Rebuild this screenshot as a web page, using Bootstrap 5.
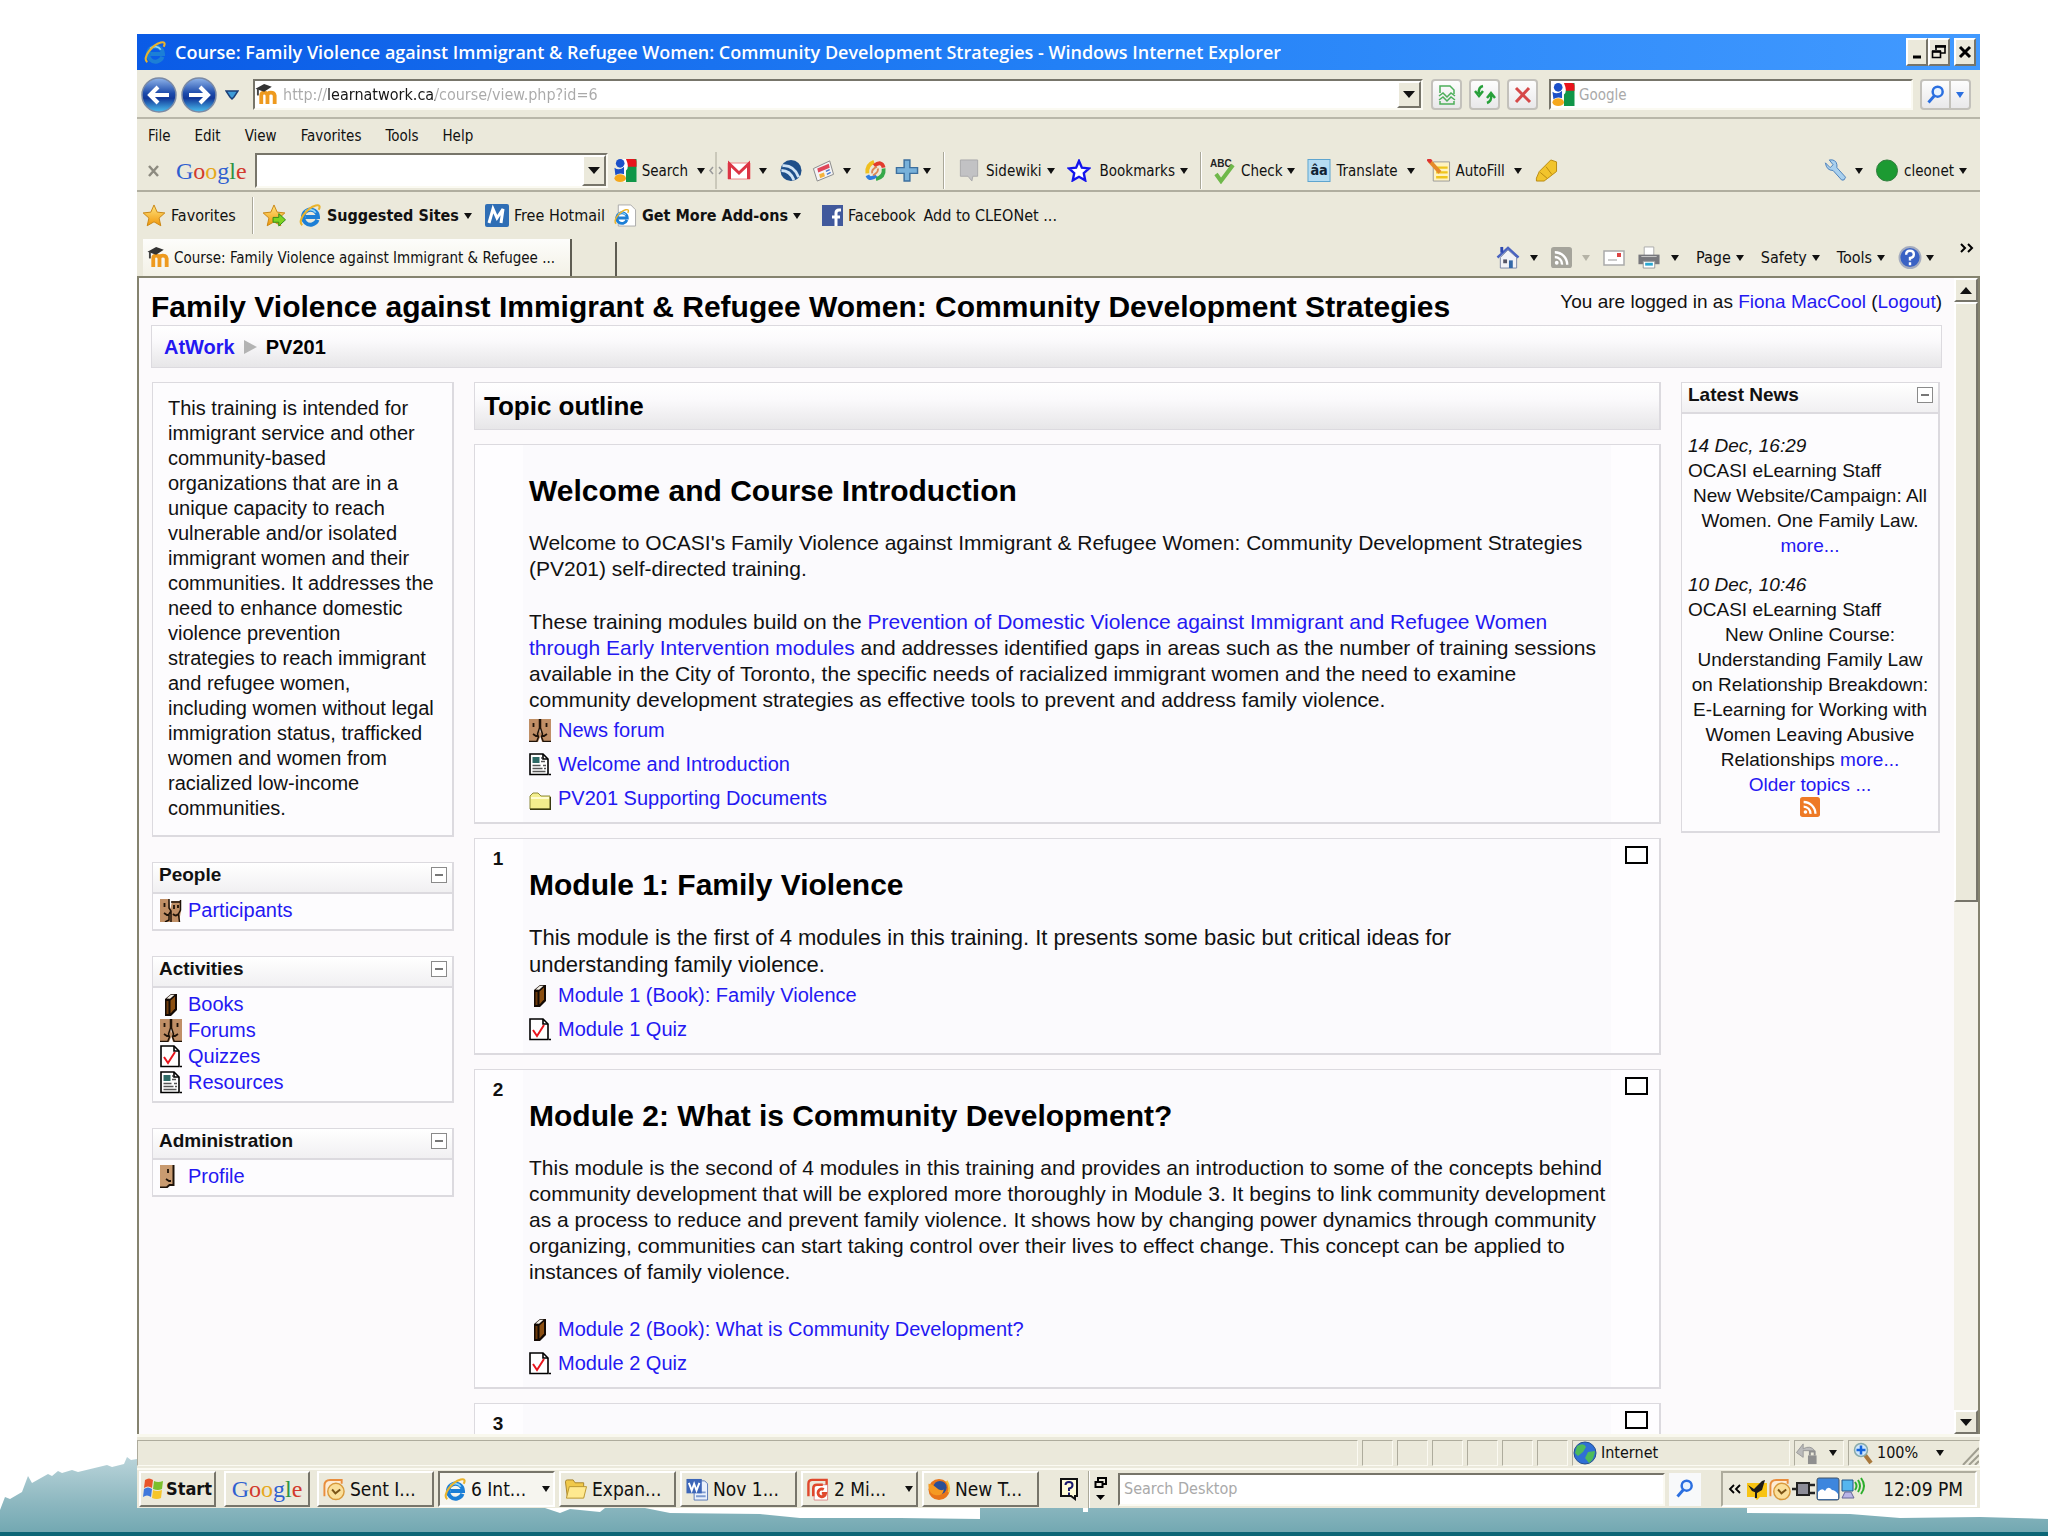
<!DOCTYPE html>
<html lang="en">
<head>
<meta charset="utf-8">
<meta name="viewport" content="width=device-width, initial-scale=1">
<title>Course: Family Violence against Immigrant &amp; Refugee Women</title>
<link href="https://cdn.jsdelivr.net/npm/bootstrap@5.3.0/dist/css/bootstrap.min.css" rel="stylesheet">
<script src="https://cdn.jsdelivr.net/npm/bootstrap@5.3.0/dist/js/bootstrap.bundle.min.js"></script>
<style>
:root{--face:#ebe9db;--link:#2418f2;--line:#dcdadf}
body{background:#fff;color:#111;font:15px/20px "DejaVu Sans Condensed","DejaVu Sans",sans-serif;height:100vh;padding:34px 68px 28px 137px;overflow:hidden}
button,input{font:inherit;color:inherit}
a{text-decoration:none;color:inherit}
svg{flex:none;display:block}
.scenery{position:absolute;left:0;bottom:0;width:100%;height:80px;z-index:-1}
.desk{background:var(--face);min-height:0}
.ico{width:24px;height:23px}
.ar{flex:none;width:0;height:0;border:4px solid transparent;border-top:6px solid #111;border-bottom:0;margin:0 5px 0 10px}
.ar-off{border-top-color:#b5b3a6}
.plain{background:none;border:0;padding:0;display:flex;align-items:center;white-space:nowrap;gap:5px}
/* title bar */
.titlebar{height:36px;background:linear-gradient(90deg,#0a5be6,#2280f6 50%,#429aff);color:#fff;font:600 18px/36px "Open Sans","Noto Sans",sans-serif;padding:0 4px 0 6px}
.winbtn{width:22px;height:28px;background:var(--face);border:2px solid;border-color:#fff #77756a #77756a #fff;padding:0;display:flex;align-items:center;justify-content:center}
/* address row */
.addressrow{height:49px;border-bottom:2px solid #b9b7a9;padding:2px 9px 0 4px}
.sunken{background:#fff;border:2px solid;border-color:#77756a #fbfaf2 #fbfaf2 #77756a;display:flex;align-items:center;min-width:0}
.sunken input{border:0;outline:0;background:none;padding:0 4px;flex:1;min-width:0}
.sunken input::placeholder{color:#a9a9a9;opacity:1}
.urlbox{height:31px;margin-left:14px;font-size:16px}
.urlbox input{background:linear-gradient(90deg,#a9a9a9 49px,#161616 49px,#161616 156px,#a9a9a9 156px);-webkit-background-clip:text;background-clip:text;-webkit-text-fill-color:transparent}
.drop{width:24px;align-self:stretch;background:var(--face);border:2px solid;border-color:#fff #77756a #77756a #fff;padding:0;display:flex;align-items:center;justify-content:center}
.drop .ar{margin:0;border-width:7px 6px 0}
.xpbtn{width:31px;height:31px;border:2px solid #c3c1bb;border-radius:4px;background:linear-gradient(#fdfdfd,#e9e8ea);padding:0;display:flex;align-items:center;justify-content:center}
.navbtns{gap:7px;margin:0 11px 0 8px}
.findbox{width:364px;height:31px;margin-right:7px}
.splitbtn{width:20px}
/* menu and toolbars */
.menurow{height:34px;padding:0 11px;gap:24px}
.gbar{height:39px;border-bottom:2px solid #b0ae9f;padding:0 9px 2px 11px}
.gbar .ar{margin:0 4px 0 8px}
.gword{font:24px/28px "Liberation Serif",serif;color:#2f5fd0}
.gword i{font-style:normal}
.r{color:#d23a2d}.y{color:#e6a81c}.g{color:#2b9443}
.gsearch{width:353px;height:35px;margin:0 5px 0 8px}
.vsep{width:2px;height:37px;border-left:1px solid #aaa899;border-right:1px solid #fff}
.favrow{height:47px;padding:0 5px;font-size:16px}
.tabrow{height:37px;padding:0 6px 0 6px}
.tab1{width:429px;height:37px;background:linear-gradient(#fdfdfb,#f3f1e6);border-right:2px solid #5e5c52;padding:0 4px;gap:3px;align-items:center}
.tab2{width:45px;height:34px;border-right:2px solid #5e5c52;align-self:flex-end}
.cmdbar{font-size:16px}
.more{margin-left:2px}
/* page */
.viewport{flex:1;min-height:0;border:2px solid #85836f;border-bottom:0;background:#fcfafc;overflow:hidden;font-family:"Liberation Sans",Arial,sans-serif}
.page{flex:1;min-width:0;padding:0 12px;overflow:hidden}
.page a{color:var(--link)}
.page h1{font-size:30px;line-height:34px;font-weight:700;color:#000;margin:0;white-space:nowrap}
.head{height:47px;padding-top:12px}
.login{font-size:19px;line-height:24px;white-space:nowrap}
.crumbs{height:43px;border:1px solid var(--line);background:linear-gradient(#fff,#fbfafc 35%,#e7e6e8);font-size:20px;font-weight:700;padding:0 12px;margin-bottom:14px;gap:9px;color:#000}
.crumbs i{border:7px solid transparent;border-left:13px solid #b3b3b3;border-right:0}
.leftcol{width:302px;margin-left:1px}
.centercol{min-width:0}
.rightcol{width:259px;margin-right:2px}
.cols{gap:20px}
.block{border:2px solid var(--line);border-width:1px 2px 2px 1px;background:#fdfcfe;font-size:20px;line-height:26px;margin-bottom:25px}
.block h2{height:31px;border-bottom:2px solid var(--line);background:linear-gradient(#fff,#f1f0f2);font-size:19px;line-height:26px;font-weight:700;margin:0;padding:0 5px 5px 6px;display:flex;justify-content:space-between;align-items:center}
.minus{width:16px;height:16px;border:1px solid #8a8a8a;background:#fff;padding:0;display:flex;align-items:center;justify-content:center}
.minus::before{content:"";width:8px;height:2px;background:#777}
.intro{padding:13px 0 14px 15px;line-height:25px;white-space:nowrap}
.list{padding:3px 6px 6px 7px}
.list a{display:flex;gap:6px;align-items:center}
.news{font-size:19px;line-height:25px;padding:19px 6px 14px;white-space:nowrap}
.newsitem{margin-bottom:14px}
.feed{color:#ee7a26!important}
.topicbar{height:48px;border:1px solid var(--line);border-right-width:2px;background:linear-gradient(#fff,#fbfafc 35%,#e7e6e8);font-size:26px;line-height:46px;font-weight:700;padding-left:9px;margin:0 0 14px;color:#000}
.topic{border:1px solid var(--line);border-width:1px 2px 2px 1px;background:#fefdff;margin-bottom:14px;font-size:21px;line-height:26px}
.num{width:48px;font-weight:700;text-align:center;padding-top:7px;flex:none;font-size:19px;padding-right:2px}
.mid{flex:1;background:#fbfafd;padding:29px 6px 7px;white-space:nowrap;min-width:0}
.mid h3{font-size:30px;line-height:34px;font-weight:700;color:#000;margin:0 0 22px}
.mid p{margin:0 0 27px}
.mid .tight{margin-bottom:0}
.mid .wide{font-size:22px;line-height:27px}
.item{display:flex;height:34px;align-items:center;gap:7px;font-size:20px}
.box{width:48px;flex:none;padding:7px 0 0 14px}
.box button{width:23px;height:18px;background:#fff;border:2px solid #000;padding:0;display:block}
.scroll{width:24px;background:#f4f2e9}
.scroll button,.thumb{background:var(--face);border:2px solid;border-color:#fff #77756a #77756a #fff;width:24px;padding:0}
.scroll button{height:24px;display:flex;align-items:center;justify-content:center}
.scroll .ar{margin:0;border-width:7px 6px 0}
.scroll .up{transform:rotate(180deg)}
.thumb{height:600px}
/* status bar and taskbar */
.status{height:34px;padding-top:3px;padding-bottom:2px;gap:4px;border-top:3px solid #f9f8ee;font-size:16px}
.pane{border:1px solid;border-color:#aeac9d #fbfaf2 #fbfaf2 #aeac9d;width:31px;display:flex;align-items:center}
.zone{width:218px}.lock{width:50px}.zoomer{width:132px}
.taskbar{height:40px;border-top:2px solid #fbfaf2;padding:1px 3px 1px 2px;gap:4px;font-size:19px}
.tb{width:117px;height:36px;background:var(--face);border:2px solid;border-color:#fff #77756a #77756a #fff;padding:0 3px;display:flex;align-items:center;gap:4px;white-space:nowrap}
.tb.on{border-color:#77756a #fff #fff #77756a;background:#f6f5ef}
.tb.start{width:77px;padding:0 1px;gap:2px;font-weight:700;font-size:18px}
.tb.logo{width:86px;margin-right:3px;justify-content:center}
.tb .ar{margin:0 0 0 auto}
.seek{height:33px;flex:1;margin-left:6px;font-size:16px}
.seekbtn{width:32px;height:33px;margin-right:16px}
.tray{width:256px;height:36px;border:2px solid;border-color:#aeac9d #fff #fff #aeac9d;padding:0 12px 0 5px;font-size:19px}
</style>
</head>
<body class="d-flex flex-column m-0">
<svg width="0" height="0" class="position-absolute" aria-hidden="true">
<defs>
<linearGradient id="gb" x1="0" y1="0" x2="0" y2="1"><stop offset="0" stop-color="#8fb4ea"/><stop offset=".45" stop-color="#1d4bab"/><stop offset=".6" stop-color="#12399a"/><stop offset="1" stop-color="#4cc0f0"/></linearGradient>
<linearGradient id="gy" x1="0" y1="0" x2="0" y2="1"><stop offset="0" stop-color="#ffe680"/><stop offset="1" stop-color="#f0960a"/></linearGradient>
<linearGradient id="gl" x1="0" y1="0" x2="0" y2="1"><stop offset="0" stop-color="#bad4da"/><stop offset=".55" stop-color="#8fb9c1"/><stop offset="1" stop-color="#6fa6b0"/></linearGradient>
</defs>
<symbol id="ie" viewBox="0 0 24 24"><path d="M19.800 16.500A7.800 7.800 0 1 1 20.300 13.500H7" fill="none" stroke="#1c7fd6" stroke-width="4.200"/><path d="M18 9a7 7 0 0 0-11-1" fill="none" stroke="#8fd8fb" stroke-width="1.800"/><path d="M4 22C-2 18 9 4 18 1.500c4-1 5 1 3 4.500" fill="none" stroke="#e9b32c" stroke-width="2.200"/></symbol>
<symbol id="moodle" viewBox="0 0 24 24"><path d="M6 22v-9q0-3 3-3t3.500 3v9M12.500 13q0-3 3.500-3t4 3v9" fill="none" stroke="#ee9a1e" stroke-width="4"/><path d="M0 6l9-5 8 3-8 5z" fill="#333"/><path d="M2.500 6v7" stroke="#444" stroke-width="2"/></symbol>
<symbol id="goog" viewBox="0 0 24 24"><path d="M10 0h14v24H11z" fill="#109648"/><path d="M11 0h10q3 0 3 3v5h-9z" fill="#e8141c"/><path d="M9 0h4q4 9 0 12v12H8z" fill="#fff"/><circle cx="7" cy="4.500" r="4.500" fill="#1c50c8"/><path d="M1 9q5 4 10-1v8q-5-2-9 1z" fill="#1c50c8"/><ellipse cx="7" cy="20" rx="6" ry="4" fill="#f5a81c"/></symbol>
<symbol id="star" viewBox="0 0 24 24"><path d="M12 1l3.300 7.500 8 .8-6 5.400 1.800 8L12 18.600 4.900 22.700l1.800-8-6-5.400 8-.8z" fill="url(#gy)" stroke="#c98512"/></symbol>
<symbol id="mag" viewBox="0 0 24 24"><circle cx="14" cy="8" r="6" fill="#e9f4ff" stroke="#2b6fe0" stroke-width="3"/><path d="M10 13l-7 8" stroke="#2b6fe0" stroke-width="3.500"/></symbol>
<symbol id="rss" viewBox="0 0 22 22"><rect width="22" height="22" rx="3" fill="currentColor"/><circle cx="6" cy="16.500" r="2" fill="#fff"/><path d="M4 10.500a7.500 7.500 0 0 1 7.500 8M4 5.500a13 13 0 0 1 13 13" fill="none" stroke="#fff" stroke-width="2.500"/></symbol>
<symbol id="faces" viewBox="0 0 22 23"><path d="M0 0h10v10l2 6-3 7H0zM12 0h10v23h-9l-2-7 1-6z" fill="#c08f66"/><path d="M10.500 0v9l-2 6 1 3-2 5M11.500 0v9l2 6-1 3 2 5M0 22.500h7M15 22.500h7" fill="none" stroke="#1e1208" stroke-width="1.500"/><path d="M4.500 4v4M17.500 4v4M4 15l3 2h2M18 15l-3 2h-2" fill="none" stroke="#1e1208" stroke-width="1.800"/></symbol>
<symbol id="people" viewBox="0 0 22 23"><path d="M0 0h9l1 8 1 15H0zM12 2h9v10l-2 11h-8l-1-11z" fill="#c08f66"/><path d="M9 0v9l2 3-2 3v6l-4 2M20.500 1v10l-2 4 1 8M11 3h9M11 12v11" fill="none" stroke="#1e1208" stroke-width="1.500"/><path d="M4.500 4v4M14 6v4M18 6v3M4 14l3 2h2M13 15q3 3 5 0" fill="none" stroke="#1e1208" stroke-width="1.800"/></symbol>
<symbol id="face" viewBox="0 0 22 23"><path d="M0 0h13v20h-4l-3 2H0z" fill="#c99b70"/><path d="M13.500 0v20h-4l-3 2.500H0" fill="none" stroke="#1e1208" stroke-width="2"/><path d="M8 4v4M6 14l3 2h2" fill="none" stroke="#1e1208" stroke-width="1.800"/></symbol>
<symbol id="book" viewBox="0 0 22 23"><path d="M5 6l6-5h6v16l-6 6H5z" fill="#140a04"/><path d="M10.500 7.500L15 3.500v12l-4.500 5z" fill="#8b4f12"/><path d="M6.500 5.500l4.500-3.700h3.500l-4.500 4z" fill="#f4f0e8"/><path d="M6.500 8h2v13h-2z" fill="#6d3b0c"/></symbol>
<symbol id="quiz" viewBox="0 0 22 23"><path d="M1 1h13l5 5v15.500H1z" fill="#fff" stroke="#000" stroke-width="1.600"/><path d="M14 1v5h5M20 21.500h2" fill="none" stroke="#000" stroke-width="1.600"/><path d="M4 12l4 6 7-11" fill="none" stroke="#e8141c" stroke-width="2"/></symbol>
<symbol id="doc" viewBox="0 0 22 23"><path d="M1 1h13l5 5v15.500H1z" fill="#fff" stroke="#000" stroke-width="1.600"/><path d="M14 1v5h5M20 21.500h2" fill="none" stroke="#000" stroke-width="1.600"/><path d="M3.500 4h7v6h-7z" fill="#2d6a66"/><path d="M12 5h1M12 8.500h4M3.500 12.500h8M14 12.500h3M3.500 15.500h10M15 15.500h2M3.500 18.500h13" stroke="#555" stroke-width="1.500"/></symbol>
<symbol id="folder" viewBox="0 0 22 23"><path d="M1 22V9l3-3h5l3 3h9v13z" fill="#f3ee8d" stroke="#8d8a3a"/><path d="M2 11h18" stroke="#fffcd0" stroke-width="2"/><path d="M1 22.200h20.500V10" fill="none" stroke="#3a3a10" stroke-width="1.500"/></symbol>
<symbol id="outlook" viewBox="0 0 24 24"><path d="M2 19V8q0-6 6-6h12v4" fill="#fdebd4" stroke="#e98d3c" stroke-width="2"/><circle cx="14" cy="14" r="8.500" fill="#fadf9a" stroke="#d89a3c" stroke-width="1.500"/><path d="M10 12l3.500 4 5-4" fill="none" stroke="#7a5416" stroke-width="2"/></symbol>
</svg>
<svg class="scenery" viewBox="0 0 2048 80" preserveAspectRatio="none" aria-hidden="true"><path d="M0 54L5 41 10 43 22 36 28 20 32 27 48 18 52 20 58 15 62 17 72 14 78 16 107 9 112 11 124 8 127 1 131 4 137 3V52H545L560 57 570 53 600 56 605 52H645L670 57 760 58 800 62H900L980 63V52H1083V56H1088V52H1747V57L1850 58 1900 62 1980 61 2048 63V80H0z" fill="url(#gl)"/><path d="M0 76h2048v4H0z" fill="#0c6676"/></svg>

<div class="desk d-flex flex-column flex-grow-1">
<header class="titlebar d-flex align-items-center">
<svg class="ico me-2"><use href="#ie"/></svg><span class="text-truncate">Course: Family Violence against Immigrant &amp; Refugee Women: Community Development Strategies - Windows Internet Explorer</span>
<div class="d-flex ms-auto">
<button class="winbtn" aria-label="Minimize"><svg width="16" height="16"><path d="M4 13h8" stroke="#000" stroke-width="3"/></svg></button>
<button class="winbtn" aria-label="Restore"><svg width="16" height="16"><path d="M5 6V2h9v7h-4M1.500 7.500h8v6h-8z" fill="none" stroke="#000" stroke-width="1.600"/><path d="M4 2.500h11M1 7.500h9" stroke="#000" stroke-width="2.500"/></svg></button>
<button class="winbtn ms-1" aria-label="Close"><svg width="16" height="16"><path d="M3 3l10 10M13 3L3 13" stroke="#000" stroke-width="3"/></svg></button>
</div></header>

<div class="addressrow d-flex align-items-center">
<button class="plain" aria-label="Back"><svg width="36" height="38" viewBox="0 0 36 38"><circle cx="18" cy="19" r="17" fill="url(#gb)" stroke="#7b8aa5" stroke-width="1.500"/><path d="M28 19H10M17 11l-8 8 8 8" fill="none" stroke="#fff" stroke-width="4"/></svg></button>
<button class="plain ms-1" aria-label="Forward"><svg width="36" height="38" viewBox="0 0 36 38"><circle cx="18" cy="19" r="17" fill="url(#gb)" stroke="#7b8aa5" stroke-width="1.500"/><path d="M8 19h18M19 11l8 8-8 8" fill="none" stroke="#fff" stroke-width="4"/></svg></button>
<button class="plain ms-2" aria-label="Recent pages"><svg width="14" height="12"><path d="M1 2h12L9 8 7 10 5 8z" fill="#3d9bd8" stroke="#1b3f78" stroke-width="1.500"/></svg></button>
<div class="sunken urlbox flex-grow-1"><svg class="ico"><use href="#moodle"/></svg><input type="text" aria-label="Address" value="http://learnatwork.ca/course/view.php?id=6"><button class="drop" aria-label="Show addresses"><span class="ar"></span></button></div>
<div class="navbtns d-flex">
<button class="xpbtn" aria-label="Compatibility view"><svg width="20" height="22"><path d="M3 9V2h10l4 4v4M3 17v3h14v-3" fill="none" stroke="#4cae5a" stroke-width="1.500"/><path d="M2 12l4-3 4 4 4-4 4 3M2 16l4-3 4 4 4-4 4 3" fill="none" stroke="#4cae5a" stroke-width="1.500"/></svg></button>
<button class="xpbtn" aria-label="Refresh"><svg width="22" height="22"><path d="M9 2Q4 3 5 10M1 7l4 5 4-5M13 19q5-2 4-8M13 14l4-5 4 5" fill="none" stroke="#27a03a" stroke-width="2.500"/></svg></button>
<button class="xpbtn" aria-label="Stop"><svg width="20" height="20"><path d="M3 3l14 14M16 3L3 17" stroke="#d64848" stroke-width="3"/></svg></button>
</div>
<div class="sunken findbox"><svg class="ico"><use href="#goog"/></svg><input type="search" aria-label="Search the web" placeholder="Google"></div>
<div class="d-flex"><button class="xpbtn rounded-end-0" aria-label="Search"><svg width="20" height="20"><use href="#mag"/></svg></button><button class="xpbtn splitbtn rounded-start-0 border-start-0" aria-label="Search options"><svg width="8" height="6"><path d="M0 0h8L4 6z" fill="#2b6fe0"/></svg></button></div>
</div>

<nav class="menurow d-flex align-items-center" aria-label="Menu"><a href="#">File</a><a href="#">Edit</a><a href="#">View</a><a href="#">Favorites</a><a href="#">Tools</a><a href="#">Help</a></nav>

<div class="gbar d-flex align-items-center">
<button class="plain" aria-label="Close toolbar"><svg width="12" height="14"><path d="M1 2l9 10M10 2L1 12" stroke="#8d8b80" stroke-width="2.500"/></svg></button>
<span class="gword ms-3">G<i class="r">o</i><i class="y">o</i>g<i class="g">l</i><i class="r">e</i></span>
<div class="sunken gsearch"><input type="text" aria-label="Google search"><button class="drop" aria-label="History"><span class="ar m-0"></span></button></div>
<button class="plain"><svg class="ico"><use href="#goog"/></svg>Search<span class="ar ms-1"></span></button>
<svg width="14" height="37"><path d="M7 0v37" stroke="#aaa899"/><path d="M4 15l-3 3.500 3 3.500M10 15l3 3.500-3 3.500" fill="none" stroke="#999" stroke-width="1.500"/></svg>
<button class="plain ms-1 gap-0" aria-label="Gmail"><svg class="ico" viewBox="0 0 24 23"><path d="M1 4h22v16H1z" fill="#fff" stroke="#e88" /><path d="M2.500 20V5l9.500 9 9.500-9v15" fill="none" stroke="#dc3545" stroke-width="3"/></svg><span class="ar"></span></button>
<button class="plain ms-2" aria-label="Earth"><svg class="ico" viewBox="0 0 24 24"><circle cx="12" cy="12" r="11" fill="#1e4f8a"/><path d="M3 7q12-1 17 12M2 12q9 0 13 10" fill="none" stroke="#cfe3f5" stroke-width="3"/></svg></button>
<button class="plain ms-2 gap-0" aria-label="News"><svg class="ico" viewBox="0 0 24 24"><path d="M2 10l17-8 4 14-17 7z" fill="#f4f4f6" stroke="#888"/><path d="M6 10l12-5 1 4-12 5z" fill="#e0475a"/><path d="M8 16l5-2 1 4-5 2z" fill="#f4b23c"/><path d="M15 13l4-2M16 16l4-2" stroke="#4a77c9" stroke-width="1.500"/></svg><span class="ar"></span></button>
<button class="plain ms-2 me-1" aria-label="Share"><svg class="ico" viewBox="0 0 24 24" fill="none" stroke-width="4"><path d="M4 15Q3 6 11 3" stroke="#f0c020"/><path d="M11 7q8-6 10 2" stroke="#e23b2e"/><path d="M21 10q1 9-8 11" stroke="#36a94a"/><path d="M13 17q-6 6-9 0" stroke="#2f7de0"/><path d="M9 15q-1-4 5-7M15 10q1 4-5 7" stroke="#d85" stroke-width="2"/></svg></button>
<button class="plain ms-1 gap-0" aria-label="Add"><svg class="ico" viewBox="0 0 24 24"><path d="M9 1h6v8h8v6h-8v8H9v-8H1V9h8z" fill="#78b1da" stroke="#3c6f9e" stroke-width="1.500"/></svg><span class="ar ms-1"></span></button>
<span class="vsep ms-2 me-2"></span>
<button class="plain ms-1"><svg class="ico" viewBox="0 0 24 24"><path d="M3 1h18v17h-5l-1 5-4-5H3z" fill="#c2c2c4" stroke="#a9a9ab"/></svg>Sidewiki<span class="ar ms-0"></span></button>
<button class="plain ms-2"><svg class="ico" viewBox="0 0 24 24"><path d="M12 2l3 7 7.500.8-5.500 5 1.500 7.500L12 18.600 5.500 22.300 7 14.800l-5.500-5L9 9z" fill="#fff" stroke="#1414ee" stroke-width="2.500"/></svg><span class="ps-1">Bookmarks</span><span class="ar ms-0"></span></button>
<span class="vsep ms-2 me-2"></span>
<button class="plain"><svg width="26" height="26" viewBox="0 0 26 26"><text x="0" y="9" font-size="10" font-weight="700" font-family="Liberation Sans,sans-serif" fill="#222">ABC</text><path d="M6 16l5 7L23 7" fill="none" stroke="#6fb84a" stroke-width="4"/></svg>Check<span class="ar ms-0"></span></button>
<button class="plain ms-2"><svg class="ico" viewBox="0 0 24 24"><rect x=".500" y=".500" width="23" height="23" fill="#b5dcf2" stroke="#5ba3cf"/><text x="3" y="17" font-size="15" font-weight="700" font-family="DejaVu Sans Condensed,sans-serif" fill="#123">âa</text></svg>Translate<span class="ar ms-1"></span></button>
<button class="plain ms-2"><svg class="ico" viewBox="0 0 24 24"><path d="M6 3h17v20H6z" fill="#fff3c0" stroke="#999"/><path d="M9 9h12M9 14h12M9 19h12" stroke="#f0c61c" stroke-width="2.500"/><path d="M2 2l11 12" stroke="#e58a2a" stroke-width="4"/><path d="M0 0l4 3" stroke="#d33" stroke-width="4"/></svg>AutoFill<span class="ar ms-1"></span></button>
<button class="plain ms-2" aria-label="Highlight"><svg class="ico" viewBox="0 0 24 24"><path d="M2 20l3-7L17 1l6 2v10l-9 7-4 3H2z" fill="#f2c42c" stroke="#b98a10"/><path d="M12 8l6 8M6 14l7 6" stroke="#b98a10"/></svg></button>
<div class="ms-auto d-flex gap-2">
<button class="plain gap-0" aria-label="Settings"><svg class="ico" viewBox="0 0 24 24"><path d="M2 4l5 5 3-3-4-5q7-1 8 5v3l9 10q-1 4-4 3l-9-10q-7 0-8-8z" fill="#a9d0ee" stroke="#4a80ba"/></svg><span class="ar"></span></button>
<button class="plain me-1"><svg class="ico" viewBox="0 0 24 24"><circle cx="12" cy="12" r="11" fill="#1c9a32" stroke="#2c7a3a"/></svg>cleonet<span class="ar ms-0 me-0"></span></button></div>
</div>

<div class="favrow d-flex align-items-center">
<button class="plain"><svg class="ico"><use href="#star"/></svg>Favorites</button>
<span class="vsep ms-3 me-2"></span>
<button class="plain" aria-label="Add to favorites"><svg class="ico" viewBox="0 0 24 24"><use href="#star"/><path d="M11 14h6v-4l7 6.500-7 6.500v-4h-6z" fill="#7ed321" stroke="#2f8a1a"/></svg></button>
<button class="plain ms-2 ps-1"><svg class="ico"><use href="#ie"/></svg><span class="fw-bold">Suggested Sites</span><span class="ar ms-0"></span></button>
<button class="plain ms-2"><svg class="ico" viewBox="0 0 24 23"><rect width="24" height="23" rx="2" fill="#2f6eb5"/><path d="M4 19L8 5l4 9 6-9-2 14" fill="none" stroke="#fff" stroke-width="3"/></svg>Free Hotmail</button>
<button class="plain ms-2"><svg class="ico" viewBox="0 0 24 24"><path d="M5 1h13l5 5v17H5z" fill="#fff" stroke="#aaa"/><svg x="0" y="5" width="17" height="17"><use href="#ie"/></svg></svg><span class="fw-bold">Get More Add-ons</span><span class="ar ms-0"></span></button>
<button class="plain ms-3"><svg width="21" height="21"><rect width="21" height="21" fill="#41599c"/><path d="M14 21v-9M19 5h-2q-3 0-3 3v4M10 12h8" fill="none" stroke="#fff" stroke-width="3"/></svg>Facebook</button>
<button class="plain ms-2">Add to CLEONet ...</button>
</div>

<div class="tabrow d-flex">
<button class="plain tab1"><svg class="ico"><use href="#moodle"/></svg>Course: Family Violence against Immigrant &amp; Refugee ...</button>
<button class="plain tab2" aria-label="New tab"></button>
<div class="cmdbar ms-auto d-flex align-items-center gap-2">
<button class="plain gap-0" aria-label="Home"><svg class="ico" viewBox="0 0 24 24"><path d="M4 12v11h17V12L12 4z" fill="#f2f2f6" stroke="#7a86a8"/><path d="M1 12L12 2l11 10" fill="none" stroke="#4a63c0" stroke-width="2.500"/><path d="M4 1h3v6H4z" fill="#2f49b0"/><path d="M13 15h4v8h-4z" fill="#3468a8"/><path d="M7 14h4v4H7z" fill="#556"/></svg><span class="ar"></span></button>
<button class="plain gap-0" aria-label="Feeds"><svg width="21" height="21" color="#a5a49b"><use href="#rss"/></svg><span class="ar ar-off"></span></button>
<button class="plain" aria-label="Mail"><svg width="22" height="18"><path d="M1 2h20v14H1z" fill="#fff" stroke="#aaa" stroke-width="1.500"/><path d="M14 4h4v4h-4z" fill="#d44"/><path d="M5 11h9" stroke="#999"/></svg></button>
<button class="plain gap-0 ms-1" aria-label="Print"><svg class="ico" viewBox="0 0 24 24"><path d="M7 1h10v9H7z" fill="#fff" stroke="#aaa"/><path d="M1 9h22v10H1z" fill="#77777c"/><path d="M4 11h16" stroke="#ccc"/><path d="M6 16h12v7H6z" fill="#fff" stroke="#999"/><path d="M8 19h8" stroke="#2aa7d0" stroke-width="3"/></svg><span class="ar"></span></button>
<button class="plain ms-1">Page<span class="ar ms-0"></span></button><button class="plain ms-1">Safety<span class="ar ms-0"></span></button><button class="plain ms-1">Tools<span class="ar ms-0"></span></button>
<button class="plain gap-0" aria-label="Help"><svg class="ico" viewBox="0 0 24 24"><circle cx="12" cy="12" r="11" fill="#3a62c4" stroke="#a4acbf" stroke-width="2"/><path d="M8 9q0-4 4-4t4 3.500-4 4V15M12 17v3" fill="none" stroke="#fff" stroke-width="2.500"/></svg><span class="ar ms-1 me-3"></span></button>
<button class="plain more align-self-start mt-1 fw-bold" aria-label="More commands"><svg width="14" height="10"><path d="M1 1l4 4-4 4M8 1l4 4-4 4" fill="none" stroke="#000" stroke-width="2"/></svg></button>
</div></div>

<div class="viewport d-flex">
<main class="page">
<div class="head d-flex justify-content-between"><h1>Family Violence against Immigrant &amp; Refugee Women: Community Development Strategies</h1><div class="login">You are logged in as <a href="#">Fiona MacCool</a> (<a href="#">Logout</a>)</div></div>
<nav class="crumbs d-flex align-items-center" aria-label="Breadcrumb"><a href="#">AtWork</a><i></i><span>PV201</span></nav>
<div class="cols d-flex align-items-start">
<aside class="leftcol flex-shrink-0">
<section class="block intro">This training is intended for<br>immigrant service and other<br>community-based<br>organizations that are in a<br>unique capacity to reach<br>vulnerable and/or isolated<br>immigrant women and their<br>communities. It addresses the<br>need to enhance domestic<br>violence prevention<br>strategies to reach immigrant<br>and refugee women,<br>including women without legal<br>immigration status, trafficked<br>women and women from<br>racialized low-income<br>communities.</section>
<section class="block"><h2>People<button class="minus" aria-label="Hide People"></button></h2><div class="list"><a href="#"><svg width="22" height="23"><use href="#people"/></svg>Participants</a></div></section>
<section class="block"><h2>Activities<button class="minus" aria-label="Hide Activities"></button></h2><div class="list"><a href="#"><svg width="22" height="23"><use href="#book"/></svg>Books</a><a href="#"><svg width="22" height="23"><use href="#faces"/></svg>Forums</a><a href="#"><svg width="22" height="23"><use href="#quiz"/></svg>Quizzes</a><a href="#"><svg width="22" height="23"><use href="#doc"/></svg>Resources</a></div></section>
<section class="block"><h2>Administration<button class="minus" aria-label="Hide Administration"></button></h2><div class="list"><a href="#"><svg width="22" height="23"><use href="#face"/></svg>Profile</a></div></section>
</aside>
<div class="centercol flex-grow-1">
<h2 class="topicbar">Topic outline</h2>
<section class="topic d-flex"><div class="num"></div><div class="mid"><h3>Welcome and Course Introduction</h3>
<p>Welcome to OCASI's Family Violence against Immigrant &amp; Refugee Women: Community Development Strategies<br>(PV201) self-directed training.</p>
<p class="tight">These training modules build on the <a href="#">Prevention of Domestic Violence against Immigrant and Refugee Women<br>through Early Intervention modules</a> and addresses identified gaps in areas such as the number of training sessions<br>available in the City of Toronto, the specific needs of racialized immigrant women and the need to examine<br>community development strategies as effective tools to prevent and address family violence.</p>
<a class="item" href="#"><svg width="22" height="23"><use href="#faces"/></svg>News forum</a><a class="item" href="#"><svg width="22" height="23"><use href="#doc"/></svg>Welcome and Introduction</a><a class="item" href="#"><svg width="22" height="23"><use href="#folder"/></svg>PV201 Supporting Documents</a></div><div class="box"></div></section>
<section class="topic d-flex"><div class="num">1</div><div class="mid"><h3>Module 1: Family Violence</h3>
<p class="tight wide">This module is the first of 4 modules in this training. It presents some basic but critical ideas for<br>understanding family violence.</p>
<a class="item" href="#"><svg width="22" height="23"><use href="#book"/></svg>Module 1 (Book): Family Violence</a><a class="item" href="#"><svg width="22" height="23"><use href="#quiz"/></svg>Module 1 Quiz</a></div><div class="box"><button aria-label="Show only topic 1"></button></div></section>
<section class="topic d-flex"><div class="num">2</div><div class="mid"><h3>Module 2: What is Community Development?</h3>
<p>This module is the second of 4 modules in this training and provides an introduction to some of the concepts behind<br>community development that will be explored more thoroughly in Module 3. It begins to link community development<br>as a process to reduce and prevent family violence. It shows how by changing power dynamics through community<br>organizing, communities can start taking control over their lives to effect change. This concept can be applied to<br>instances of family violence.</p>
<a class="item" href="#"><svg width="22" height="23"><use href="#book"/></svg>Module 2 (Book): What is Community Development?</a><a class="item" href="#"><svg width="22" height="23"><use href="#quiz"/></svg>Module 2 Quiz</a></div><div class="box"><button aria-label="Show only topic 2"></button></div></section>
<section class="topic d-flex"><div class="num">3</div><div class="mid"></div><div class="box"><button aria-label="Show only topic 3"></button></div></section>
</div>
<aside class="rightcol flex-shrink-0"><section class="block"><h2>Latest News<button class="minus" aria-label="Hide Latest News"></button></h2>
<div class="news"><i>14 Dec, 16:29</i><br>OCASI eLearning Staff<div class="text-center newsitem">New Website/Campaign: All<br>Women. One Family Law.<br><a href="#">more...</a></div>
<i>10 Dec, 10:46</i><br>OCASI eLearning Staff<div class="text-center">New Online Course:<br>Understanding Family Law<br>on Relationship Breakdown:<br>E-Learning for Working with<br>Women Leaving Abusive<br>Relationships <a href="#">more...</a><br><a href="#">Older topics ...</a><a href="#" class="feed d-flex justify-content-center" aria-label="RSS feed"><svg width="20" height="20"><use href="#rss"/></svg></a></div></div></section></aside>
</div></main>
<div class="scroll d-flex flex-column flex-shrink-0"><button aria-label="Scroll up"><span class="ar up"></span></button><div class="thumb"></div><button class="mt-auto" aria-label="Scroll down"><span class="ar"></span></button></div>
</div>

<div class="status d-flex flex-shrink-0"><div class="pane flex-grow-1"></div><div class="pane"></div><div class="pane"></div><div class="pane"></div><div class="pane"></div><div class="pane"></div><div class="pane"></div>
<div class="pane zone gap-1"><svg width="24" height="24" viewBox="0 0 24 24"><circle cx="12" cy="12" r="11" fill="#2f6fd6" stroke="#27508f"/><path d="M4 5q7-4 9 1l-3 5-5 4-3-3zM15 11l7-1q-1 9-6 12l-4-5z" fill="#4dbb5a"/></svg>Internet</div>
<div class="pane lock"><svg class="ico" viewBox="0 0 24 24"><path d="M1 11l7-9v5q8-4 12 2H8v7z" fill="#bbb" stroke="#999"/><path d="M13 14h9v9h-9z" fill="#8f8f8f"/><path d="M15 14v-4h5v4" fill="none" stroke="#8f8f8f" stroke-width="2"/></svg><span class="ar"></span></div>
<div class="pane zoomer ps-1"><svg width="20" height="23" viewBox="0 0 20 23"><path d="M12 13l6 8" stroke="#a8783c" stroke-width="4"/><circle cx="8" cy="8" r="6.500" fill="#cfe6fb" stroke="#8aa" stroke-width="1.500"/><path d="M8 3.500v9M3.500 8h9" stroke="#1464dc" stroke-width="2.500"/></svg><span class="ms-1 me-2">100%</span><span class="ar"></span><svg class="ms-auto align-self-end" width="17" height="20"><path d="M1 20L17 3M7 20L17 10M13 20l4-4" stroke="#a09e90" stroke-width="2"/></svg></div></div>

<footer class="taskbar d-flex align-items-center flex-shrink-0">
<button class="tb start me-1"><svg width="22" height="24" viewBox="0 0 22 24"><path d="M3 3q4-3 8 0l-1 8q-4-3-8 0z" fill="#e8552a"/><path d="M12 4q4 2 9 0l-1 8q-4 2-9 0z" fill="#7bbf2c"/><path d="M2 12q4-3 8 0l-1 8q-4-3-8 0z" fill="#3f78dc"/><path d="M11 13q4 2 9 0l-1 8q-4 2-9 0z" fill="#f6c52a"/></svg>Start</button>
<button class="tb logo"><span class="gword">G<i class="r">o</i><i class="y">o</i>g<i class="g">l</i><i class="r">e</i></span></button>
<button class="tb"><svg class="ico"><use href="#outlook"/></svg>Sent I...</button>
<button class="tb on"><svg class="ico"><use href="#ie"/></svg>6 Int...<span class="ar"></span></button>
<button class="tb"><svg class="ico" viewBox="0 0 24 24"><path d="M1 4q0-2 2-2h6l2 3h9v15H3z" fill="#f0c94a" stroke="#a8842a"/><path d="M5 9h18l-3 12H2z" fill="#ffe98f" stroke="#b9952f"/></svg>Expan...</button>
<button class="tb"><svg class="ico" viewBox="0 0 24 24"><path d="M9 3h11l3 3v17H9z" fill="#eaf1fc" stroke="#5878b8"/><path d="M11 19h10M13 15h8" stroke="#7c9ad0" stroke-width="2"/><path d="M1 1h16v15H1z" fill="#3d66b8"/><path d="M3.500 5l3 8L9 6l2.500 7 3-8" fill="none" stroke="#fff" stroke-width="2"/></svg>Nov 1...</button>
<button class="tb"><svg class="ico" viewBox="0 0 24 24"><path d="M8 7h14v16H8z" fill="#fff" stroke="#d88"/><path d="M2 19V6q0-4 4-4h15v5" fill="none" stroke="#e0482c" stroke-width="2.500"/><path d="M7 19v-8q0-4 4-4h6" fill="none" stroke="#e0482c" stroke-width="2.500"/><path d="M18 12a4 4 0 1 0 2 4h-4" fill="none" stroke="#e0482c" stroke-width="3"/></svg>2 Mi...<span class="ar"></span></button>
<button class="tb"><svg class="ico" viewBox="0 0 24 24"><circle cx="12" cy="12" r="11" fill="#e8751a"/><circle cx="13" cy="10" r="7" fill="#2b4f96"/><path d="M1 6q4 0 8 4t8 2q-1 7-8 6T1 9z" fill="#f59a22"/><path d="M20 3q4 6 2 12" fill="none" stroke="#f7c13a" stroke-width="2"/></svg>New T...</button>
<svg class="ms-3" width="21" height="24"><path d="M2 2h16v17h-2v3l-4-3H2z" fill="#fffcd8" stroke="#111" stroke-width="2"/><path d="M6.500 8q0-3 3.500-3t3.500 3-3.500 3.500V14M10 15.500V18" fill="none" stroke="#18186e" stroke-width="2"/></svg>
<span class="vsep ms-1"></span>
<svg width="14" height="28"><path d="M4 6V3h8v6H9M1.500 7h7v5h-7z" fill="none" stroke="#000" stroke-width="2"/><path d="M2 20h9l-4.500 5z"/></svg>
<div class="sunken seek"><input type="search" aria-label="Search Desktop" placeholder="Search Desktop"></div>
<button class="plain seekbtn bg-light justify-content-center" aria-label="Search"><svg width="20" height="22"><use href="#mag"/></svg></button>
<div class="tray d-flex align-items-center"><svg width="14" height="10"><path d="M6 1L2 5l4 4M12 1L8 5l4 4" fill="none" stroke="#000" stroke-width="1.800"/></svg>
<svg class="ms-1" width="22" height="23"><path d="M1 5h20v14h-7l-3 3-3-3H1z" fill="#f8c414"/><path d="M2 7l6 4 8-8 3-1-3 10-5 3-5-2z" fill="#1b1b1b"/><path d="M10 14v6" stroke="#1b1b1b" stroke-width="2"/></svg>
<svg class="ico"><use href="#outlook"/></svg>
<svg width="24" height="20"><path d="M5 4h12v12H5z" fill="#8d8d98" stroke="#222" stroke-width="2"/><path d="M0 10h5M17 6h6M17 14h6" stroke="#222" stroke-width="2.500"/></svg>
<svg width="24" height="24"><rect x="1" y="1" width="22" height="22" rx="2" fill="#3d86de" stroke="#456"/><path d="M2 22v-7q4-5 7-1 3-6 7-1 3 0 6 4v5z" fill="#fff"/></svg>
<svg width="26" height="24"><path d="M2 3h11v11H2z" fill="#56b6ee" stroke="#258"/><path d="M5 15h6l3 6H2z" fill="#b9b4e6" stroke="#669"/><path d="M15 5q3 4 0 8M18 3q4 6 0 12M21 1q6 8 0 16" fill="none" stroke="#2cae2c" stroke-width="2"/></svg>
<span class="ms-auto text-nowrap">12:09 PM</span></div>
</footer>
</div>
</body>
</html>
